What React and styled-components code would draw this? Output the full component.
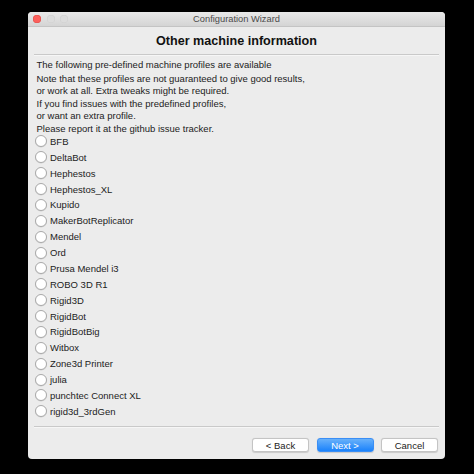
import React from "react";
import styled, { createGlobalStyle } from "styled-components";

const Global = createGlobalStyle`
  html, body { margin: 0; padding: 0; background: #000; }
  body { font-family: "Liberation Sans", Arial, sans-serif; }
`;

const Window = styled.div`
  margin: 12px 0 0 28px;
  width: 417px;
  height: 447px;
  background: #ececec;
  border-radius: 4px;
  display: flex;
  flex-direction: column;
  overflow: hidden;
`;

const TitleBar = styled.div`
  height: 15px;
  flex: none;
  position: relative;
  display: flex;
  align-items: center;
  justify-content: center;
  background: linear-gradient(#e9e9e9, #d4d4d4);
  border-bottom: 1px solid #c4c4c4;
  box-sizing: border-box;
`;

const Lights = styled.div`
  position: absolute;
  left: 5px;
  top: 3px;
  display: flex;
  gap: 5.5px;
`;

const Light = styled.span`
  width: 8px;
  height: 8px;
  border-radius: 50%;
  background: ${(p) => p.$c};
  box-shadow: inset 0 0 0 0.5px ${(p) => p.$b};
`;

const Title = styled.div`
  font-size: 9.3px;
  color: #4a4a4a;
`;

const Header = styled.div`
  height: 27px;
  flex: none;
  display: flex;
  align-items: center;
  justify-content: center;
  font-weight: bold;
  font-size: 12.6px;
  color: #111;
  padding-top: 1px;
  box-sizing: border-box;
`;

const Rule = styled.div`
  height: 1px;
  margin: 0 6px 0 6px;
  background: #c9c9c9;
  border-bottom: 1px solid #f6f6f6;
  flex: none;
`;

const Body = styled.div`
  flex: 1;
  padding: 2px 8px 0 8px;
  font-size: 9.5px;
  color: #222;
`;

const Para = styled.div`
  line-height: ${(p) => p.$lh}px;
  margin: 0 0 ${(p) => p.$mb || 0}px 0.5px;
`;

const List = styled.div`
  display: flex;
  flex-direction: column;
  margin-top: -1.5px;
`;

const Row = styled.label`
  height: 15.88px;
  display: flex;
  align-items: center;
  gap: 3px;
  margin-left: -1px;
`;

const Radio = styled.span`
  width: 10px;
  height: 10px;
  border-radius: 50%;
  background: #fff;
  border: 0.5px solid #a9a9a9;
  box-shadow: 0 0.5px 0.5px rgba(0, 0, 0, 0.12);
  flex: none;
`;

const Footer = styled.div`
  flex: none;
  display: flex;
  flex-direction: column;
`;

const Buttons = styled.div`
  display: flex;
  justify-content: flex-end;
  gap: 7.5px;
  padding: 10px 7px 7px 0;
`;

const Button = styled.button`
  width: 57px;
  height: 14px;
  padding: 0;
  border-radius: 3px;
  font-family: "Liberation Sans", Arial, sans-serif;
  font-size: 9.5px;
  line-height: 13px;
  color: ${(p) => (p.$primary ? "#fff" : "#222")};
  background: ${(p) => (p.$primary ? "linear-gradient(#68b1fa, #1a82fb)" : "#fff")};
  border: 0.5px solid ${(p) => (p.$primary ? "#3a8ef5" : "#c4c4c4")};
  box-shadow: 0 0.5px 1px rgba(0, 0, 0, 0.15);
`;

const machines = [
  "BFB",
  "DeltaBot",
  "Hephestos",
  "Hephestos_XL",
  "Kupido",
  "MakerBotReplicator",
  "Mendel",
  "Ord",
  "Prusa Mendel i3",
  "ROBO 3D R1",
  "Rigid3D",
  "RigidBot",
  "RigidBotBig",
  "Witbox",
  "Zone3d Printer",
  "julia",
  "punchtec Connect XL",
  "rigid3d_3rdGen",
];

export default function App() {
  return (
    <>
      <Global />
      <Window>
        <TitleBar>
          <Lights>
            <Light $c="#fc605c" $b="#de4a45" />
            <Light $c="#dcdcdc" $b="#cfcfcf" />
            <Light $c="#dcdcdc" $b="#cfcfcf" />
          </Lights>
          <Title>Configuration Wizard</Title>
        </TitleBar>
        <Header>Other machine information</Header>
        <Rule />
        <Body>
          <Para $lh={13} $mb={1.5}>
            The following pre-defined machine profiles are available
          </Para>
          <Para $lh={12.5}>
            Note that these profiles are not guaranteed to give good results,
            <br />
            or work at all. Extra tweaks might be required.
            <br />
            If you find issues with the predefined profiles,
            <br />
            or want an extra profile.
            <br />
            Please report it at the github issue tracker.
          </Para>
          <List>
            {machines.map((m) => (
              <Row key={m}>
                <Radio />
                {m}
              </Row>
            ))}
          </List>
        </Body>
        <Footer>
          <Rule />
          <Buttons>
            <Button>&lt; Back</Button>
            <Button $primary>Next &gt;</Button>
            <Button>Cancel</Button>
          </Buttons>
        </Footer>
      </Window>
    </>
  );
}
